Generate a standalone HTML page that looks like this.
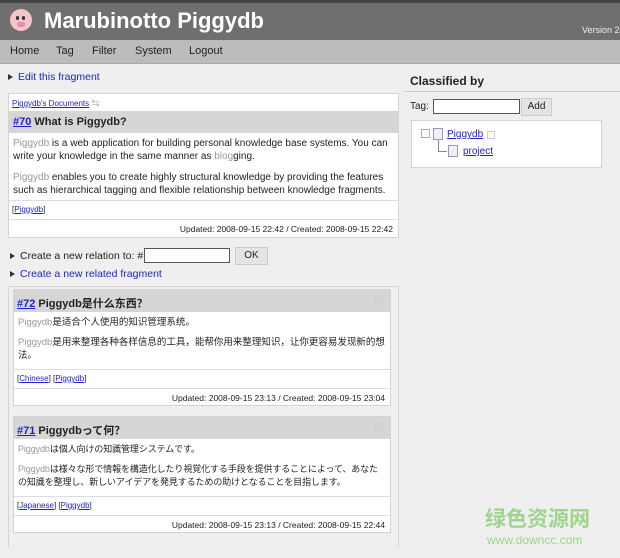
<!DOCTYPE html>
<html><head><meta charset="utf-8"><style>
body{margin:0;width:620px;height:558px;overflow:hidden;background:#efefef;font-family:"Liberation Sans","Noto Sans CJK SC",sans-serif;font-size:10px;color:#222;position:relative}
.a{position:absolute}
a{color:#2222cc;text-decoration:underline}
.hd{left:0;top:0;width:620px;height:40px;background:#6f6f6f;border-top:3px solid #444;box-sizing:border-box}
.nav{left:0;top:40px;width:620px;height:23px;background:#bcbcbc;border-bottom:1px solid #aaa}
.nav span{position:absolute;top:5px;font-size:11px;color:#222}
.box{background:#fff;border:1px solid #d4d4d4;overflow:hidden}
.gh{background:#d6d6d6;position:relative}
.g{color:#999}
.tri{display:inline-block;width:0;height:0;border-left:5px solid #333;border-top:3.5px solid transparent;border-bottom:3.5px solid transparent;margin-right:5px}
.sep{border-top:1px solid #ddd}
</style></head><body>
<div class="a hd"></div>
<div class="a" style="left:10px;top:9px;width:22px;height:22px;border-radius:50%;background:#f4c3cc"><div class="a" style="left:6px;top:7px;width:3px;height:4px;background:#333;border-radius:2px"></div><div class="a" style="left:12px;top:7px;width:3px;height:4px;background:#333;border-radius:2px"></div><div class="a" style="left:7px;top:13px;width:8px;height:5px;background:#e78fa0;border-radius:3px"></div></div>
<div class="a" style="left:44px;top:8px;font-size:22px;font-weight:bold;color:#fff">Marubinotto Piggydb</div>
<div class="a" style="left:582px;top:25px;font-size:9px;color:#eee">Version 2</div>
<div class="a nav"><span style="left:10px">Home</span><span style="left:56px">Tag</span><span style="left:92px">Filter</span><span style="left:135px">System</span><span style="left:189px">Logout</span></div>

<div class="a" style="left:8px;top:71px;font-size:10.5px"><span class="tri"></span><a style="text-decoration:none">Edit this fragment</a></div>

<div class="a box" style="left:8px;top:93px;width:389px;height:143px">
<div style="height:17px;padding:4px 0 0 3px;box-sizing:border-box;font-size:8px"><a>Piggydb's Documents</a> <span class="g">⇆</span></div>
<div class="gh" style="height:22px;padding:5px 0 0 4px;box-sizing:border-box;font-size:11px;font-weight:bold"><a>#70</a> What is Piggydb?</div>
<div style="padding:4px 4px 0 4px;height:67px;box-sizing:border-box;font-size:10px;line-height:13px"><span class="g">Piggydb</span> is a web application for building personal knowledge base systems. You can write your knowledge in the same manner as <span class="g">blog</span>ging.<div style="height:8px"></div><span class="g">Piggydb</span> enables you to create highly structural knowledge by providing the features such as hierarchical tagging and flexible relationship between knowledge fragments.</div>
<div class="sep" style="height:19px;padding:4px 0 0 3px;box-sizing:border-box;font-size:8px">[<a>Piggydb</a>]</div>
<div class="sep" style="height:17px;padding:4px 5px 0 0;box-sizing:border-box;text-align:right;font-size:8.5px">Updated: 2008-09-15 22:42 / Created: 2008-09-15 22:42</div>
</div>

<div class="a" style="left:10px;top:250px;font-size:10.5px"><span class="tri"></span>Create a new relation to: #</div>
<div class="a" style="left:144px;top:248px;width:84px;height:13px;background:#fff;border:1px solid #555"></div>
<div class="a" style="left:235px;top:247px;width:31px;height:16px;background:#e4e4e4;border:1px solid #ccc;text-align:center;font-size:10px;line-height:16px">OK</div>
<div class="a" style="left:10px;top:268px;font-size:10.5px"><span class="tri"></span><a style="text-decoration:none">Create a new related fragment</a></div>

<div class="a" style="left:8px;top:286px;width:389px;height:260px;border:1px solid #d4d4d4;border-bottom:0"></div>

<div class="a box" style="left:13px;top:289px;width:376px;height:115px">
<div class="gh" style="height:22px;padding:5px 0 0 3px;box-sizing:border-box;font-size:11px;font-weight:bold"><a>#72</a> Piggydb是什么东西？<span class="a" style="right:6px;top:4px;color:#ccc;font-weight:normal">☒</span></div>
<div style="padding:4px 4px 0 4px;height:57px;box-sizing:border-box;font-size:9.5px;line-height:13px"><span class="g">Piggydb</span>是适合个人使用的知识管理系统。<div style="height:7px"></div><span class="g">Piggydb</span>是用来整理各种各样信息的工具，能帮你用来整理知识，让你更容易发现新的想法。</div>
<div class="sep" style="height:19px;padding:4px 0 0 3px;box-sizing:border-box;font-size:8px">[<a>Chinese</a>] [<a>Piggydb</a>]</div>
<div class="sep" style="height:17px;padding:4px 5px 0 0;box-sizing:border-box;text-align:right;font-size:8.5px">Updated: 2008-09-15 23:13 / Created: 2008-09-15 23:04</div>
</div>

<div class="a box" style="left:13px;top:416px;width:376px;height:115px">
<div class="gh" style="height:22px;padding:5px 0 0 3px;box-sizing:border-box;font-size:11px;font-weight:bold"><a>#71</a> Piggydbって何？<span class="a" style="right:6px;top:4px;color:#ccc;font-weight:normal">☒</span></div>
<div style="padding:4px 4px 0 4px;height:57px;box-sizing:border-box;font-size:9px;line-height:13px;font-family:'Liberation Sans','Noto Sans CJK JP',sans-serif;letter-spacing:-0.1px"><span class="g">Piggydb</span>は個人向けの知識管理システムです。<div style="height:7px"></div><span class="g">Piggydb</span>は様々な形で情報を構造化したり視覚化する手段を提供することによって、あなたの知識を整理し、新しいアイデアを発見するための助けとなることを目指します。</div>
<div class="sep" style="height:19px;padding:4px 0 0 3px;box-sizing:border-box;font-size:8px">[<a>Japanese</a>] [<a>Piggydb</a>]</div>
<div class="sep" style="height:17px;padding:4px 5px 0 0;box-sizing:border-box;text-align:right;font-size:8.5px">Updated: 2008-09-15 23:13 / Created: 2008-09-15 22:44</div>
</div>

<div class="a" style="left:410px;top:74px;font-size:12px;font-weight:bold">Classified by</div>
<div class="a" style="left:405px;top:91px;width:215px;border-top:1px solid #ccc"></div>
<div class="a" style="left:410px;top:101px;font-size:10px">Tag:</div>
<div class="a" style="left:433px;top:99px;width:85px;height:13px;background:#fff;border:1px solid #555"></div>
<div class="a" style="left:521px;top:98px;width:29px;height:16px;background:#e4e4e4;border:1px solid #ccc;text-align:center;font-size:10px;line-height:16px">Add</div>
<div class="a box" style="left:411px;top:120px;width:189px;height:46px"></div>
<div class="a" style="left:421px;top:129px;width:7px;height:7px;border:1px solid #aaa;background:#fff"></div>
<div class="a" style="left:433px;top:128px;width:8px;height:10px;border:1px solid #99a;background:#eef"></div>
<div class="a" style="left:447px;top:129px;font-size:10px"><a>Piggydb</a></div>
<div class="a" style="left:487px;top:131px;width:6px;height:6px;border:1px solid #ccc"></div>
<div class="a" style="left:438px;top:140px;width:8px;height:11px;border-left:1px solid #888;border-bottom:1px solid #888"></div>
<div class="a" style="left:448px;top:145px;width:8px;height:10px;border:1px solid #99a;background:#eef"></div>
<div class="a" style="left:463px;top:146px;font-size:10px"><a>project</a></div>

<div class="a" style="left:485px;top:506px;font-size:21px;font-weight:bold;color:#9fd48e;font-family:'Noto Sans CJK SC',sans-serif;line-height:24px">绿色资源网</div>
<div class="a" style="left:487px;top:533px;font-size:12px;color:#9fd48e">www.downcc.com</div>
</body></html>
